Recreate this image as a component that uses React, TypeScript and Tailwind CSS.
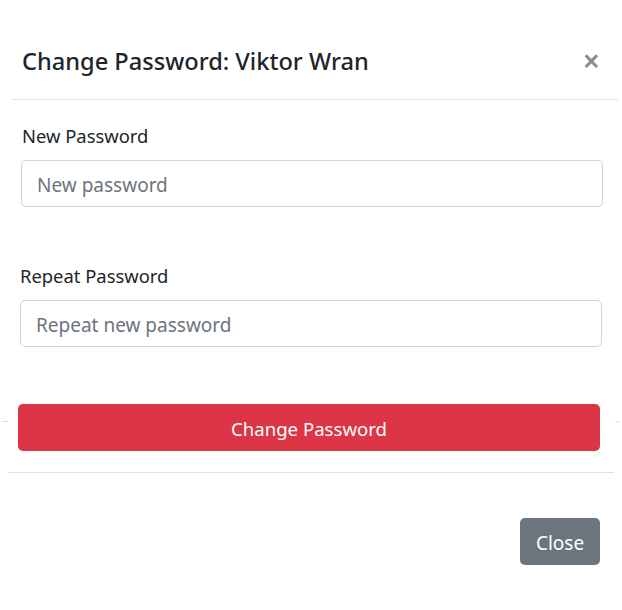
import React from "react";

export default function App() {
  return (
    <div className="w-[622px] h-[610px] bg-white text-[#212529]" style={{ fontFamily: '"Noto Sans", "Open Sans", sans-serif' }}>
      <div className="pt-[44px] pl-[22px] pr-[22px] flex items-center justify-between h-[99px] pb-[22px]">
        <h5 className="text-[23.6px] font-medium leading-[34px] text-[#212529]">Change Password: Viktor Wran</h5>
        <span className="text-[30px] font-semibold leading-none text-[#8a8a8a]">×</span>
      </div>
      <div className="ml-[12px] w-[606px] h-px bg-[#dee2e6]" />
      <div className="pt-[23px] pl-[21px] pr-[19px]">
        <div className="text-[18.4px] leading-[26px] pl-[1px]">New Password</div>
        <div className="mt-[11px] h-[47px] border border-[#ced4da] rounded-[5px] flex items-center pl-[15px] pt-[3px] text-[19px] text-[#6c757d]">New password</div>
      </div>
      <div className="pt-[56px] pl-[20px] pr-[20px]">
        <div className="text-[18.4px] leading-[26px]">Repeat Password</div>
        <div className="mt-[11px] h-[47px] border border-[#ced4da] rounded-[5px] flex items-center pl-[15px] pt-[3px] text-[19px] text-[#6c757d]">Repeat new password</div>
      </div>
      <div className="mt-[57px] flex items-start">
        <div className="mt-[17px] ml-[2px] w-[6px] h-px bg-[#dee2e6]" />
        <div className="ml-[10px] w-[582px] h-[47px] pt-[3px] rounded-[5px] bg-[#dc3545] text-white flex items-center justify-center text-[18.6px]">Change Password</div>
        <div className="mt-[17px] ml-[15px] w-[5px] h-px bg-[#dee2e6]" />
      </div>
      <div className="mt-[21px] ml-[8px] w-[606px] h-px bg-[#dee2e6]" />
      <div className="flex justify-end pr-[22px] pt-[45px]">
        <div className="w-[80px] h-[47px] pt-[3px] rounded-[5px] bg-[#6c757d] text-white flex items-center justify-center text-[19px]">Close</div>
      </div>
    </div>
  );
}
